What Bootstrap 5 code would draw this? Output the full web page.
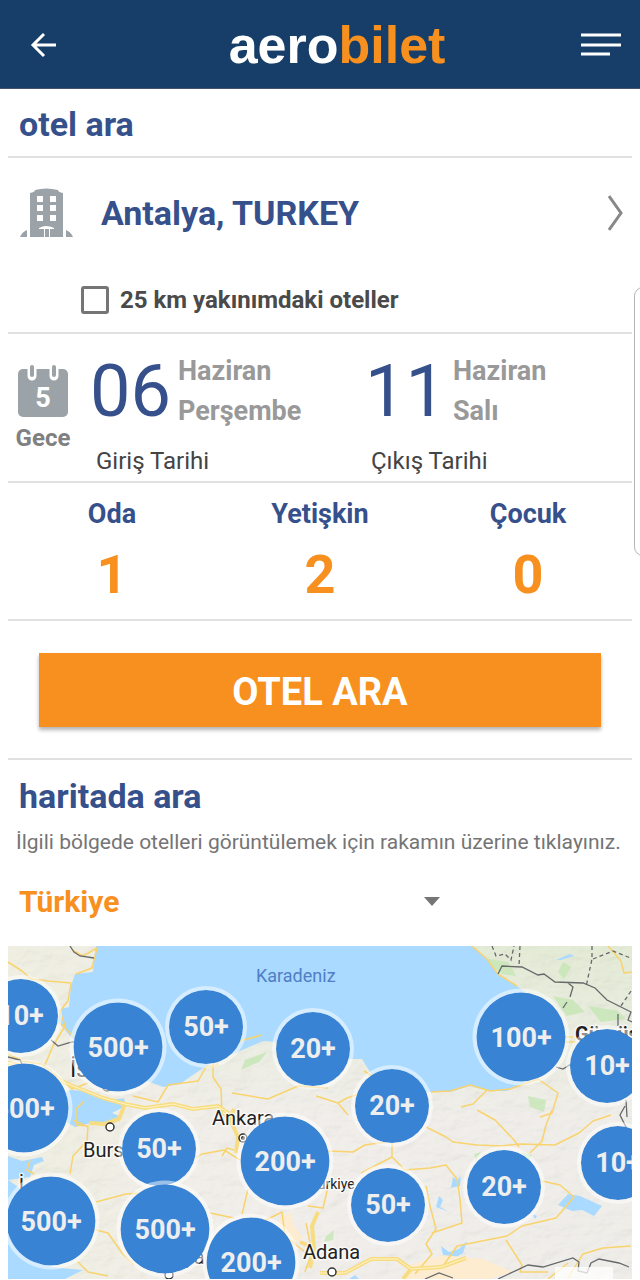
<!DOCTYPE html>
<html lang="tr">
<head>
<meta charset="utf-8">
<meta name="viewport" content="width=device-width, initial-scale=1">
<title>aerobilet – otel ara</title>
<link href="https://cdn.jsdelivr.net/npm/bootstrap@5.3.0/dist/css/bootstrap.min.css" rel="stylesheet">
<style>
:root { --navy:#163e69; --ink:#36508c; --orange:#f7901e; --line:#e0e0e0; --muted:#999; }
body { font-family:Roboto, sans-serif; color:#444; background:#fff; overflow-x:hidden; }
button { color:inherit; }
.topbar { background:var(--navy); height:89px; padding:2px 18px 0 28px; border-bottom:1px solid #45536f; }
.topbar .btn { width:42px; }
.brand { font:700 52px/56px "Liberation Sans", sans-serif; color:#fff; padding-left:24px; margin-right:auto; margin-left:auto; }
.brand span { color:var(--orange); }
.rule { border-bottom:2px solid var(--line); }
.title { font-size:34px; line-height:40px; font-weight:700; color:var(--ink); margin:0; padding-left:11px; }
.head { height:69px; padding-top:15px; }
.place { height:110px; padding:0 8px 0 12px; gap:28px; }
.place-name { font-size:34px; line-height:40px; font-weight:700; color:var(--ink); }
.near { height:64px; padding-left:73px; gap:11px; font-size:24px; line-height:28px; font-weight:700; }
.near .form-check-input { width:28px; height:28px; margin:0; border:3px solid #757575; border-radius:3px; }
.near label { color:#4a4a4a; }
.stay { height:149px; }
.nights { width:70px; padding-top:30px; color:#808080; font-size:24px; line-height:28px; font-weight:700; }
.nights svg { margin-bottom:6px; }
.date-box { padding-top:14px; color:var(--muted); }
.day { font-size:72px; line-height:88px; color:var(--ink); width:88px; }
.month { font-size:27px; line-height:40px; font-weight:700; padding-top:3px; }
.caption { font-size:24px; line-height:28px; color:#444; padding-left:6px; margin-top:11px; }
.guests { height:138px; padding-top:14px; }
.guest-label { font-size:27px; line-height:34px; font-weight:700; color:var(--ink); }
.guest-count { font-size:54px; line-height:64px; font-weight:700; color:var(--orange); margin-top:12px; }
.search { padding:32px 31px; height:139px; }
.search .btn { background:var(--orange); color:#fff; font-size:38px; line-height:44px; font-weight:700; padding:17px 15px 13px; border:0; border-radius:0; box-shadow:0 3px 4px rgba(0,0,0,.3); }
.hint { font-size:21px; line-height:28px; color:#757575; margin:12px 0 0; padding-left:8px; }
.country { appearance:none; width:428px; border:0; padding:0 0 0 11px; margin:26px 0 24px; background:transparent; font-size:30px; line-height:40px; height:40px; font-weight:700; color:var(--orange); }
.country-wrap svg { margin-left:-12px; pointer-events:none; }
.map { position:relative; overflow:hidden; aspect-ratio:624/333; }
.map > svg { display:block; width:100%; height:100%; }
.pin { position:absolute; left:calc(var(--x) / 624 * 100%); top:calc(var(--y) / 333 * 100%); width:82px; height:82px; transform:translate(-50%,-50%); padding:0; border:4px solid rgba(255,255,255,.5); border-radius:50%; background:#3883d3; background-clip:padding-box; color:#eee; font-size:27px; line-height:32px; font-weight:700; white-space:nowrap; }
.pin-lg { width:97px; height:97px; }
.drawer { position:absolute; right:-12px; top:287px; width:18px; height:269px; background:#fff; border:1px solid #b5b5b5; border-radius:10px; }
</style>
</head>
<body>
<div class="position-relative overflow-hidden">
<header class="topbar d-flex align-items-center justify-content-between">
  <button class="btn p-0 border-0 lh-1 text-start" aria-label="Geri"><svg width="40" height="30" viewBox="0 0 40 30" fill="none" stroke="#fff" stroke-width="3"><path d="M28 15H5M16 4 5 15l11 11"/></svg></button>
  <div class="brand">aero<span>bilet</span></div>
  <button class="btn p-0 border-0 lh-1" aria-label="Menü"><svg width="42" height="26" viewBox="0 0 42 26" fill="none" stroke="#fff" stroke-width="3"><path d="M1 3h40M1 13h40M1 22h29"/></svg></button>
</header>
<main class="px-2">
  <div class="head rule"><h1 class="title">otel ara</h1></div>
  <section class="rule">
    <button class="place btn border-0 rounded-0 w-100 d-flex align-items-center text-start">
      <svg width="53" height="52" viewBox="0 0 53 52" fill="#9ba3a8"><path fill-rule="evenodd" d="M10 6Q15 5 15 3Q26 0 38 3Q38 5 43 6V50H34V41Q26 37 19 41V50H10ZM17 9v6h6V9Zm13 0v6h6V9ZM17 18v6h6v-6Zm13 0v6h6v-6ZM17 28v6h6v-6Zm13 0v6h6v-6Z"/><path d="M0 50q2-5 7-7v7ZM53 50q-2-5-7-7v7ZM19 42h5v8h-5Zm6 0h4v8h-4Zm5 0h4v8h-4Z"/></svg>
      <span class="place-name flex-grow-1">Antalya, TURKEY</span>
      <svg width="16" height="38" viewBox="0 0 16 38" fill="none" stroke="#888" stroke-width="3"><path d="M1 2 13 19 1 36"/></svg>
    </button>
    <div class="near d-flex align-items-center"><input class="form-check-input" type="checkbox" id="near"><label for="near">25 km yakınımdaki oteller</label></div>
  </section>
  <section class="stay rule d-flex">
    <div class="nights text-center">
      <svg class="d-block mx-auto" width="52" height="54" viewBox="0 0 52 54"><rect x="1" y="5" width="50" height="48" rx="5" fill="#9ba3a8"/><path d="M15 2v10M37 2v10" stroke="#fff" stroke-width="9" stroke-linecap="round"/><path d="M15 3v8M37 3v8" stroke="#9ba3a8" stroke-width="4" stroke-linecap="round"/><text x="26" y="43" font-size="27" font-weight="700" text-anchor="middle" fill="#fff">5</text></svg>
      Gece
    </div>
    <div class="d-flex flex-grow-1 ps-2 ms-1">
      <div class="date-box col-6"><div class="d-flex"><div class="day">06</div><div class="month">Haziran<br>Perşembe</div></div><div class="caption">Giriş Tarihi</div></div>
      <div class="date-box col-6 ps-1"><div class="d-flex"><div class="day">11</div><div class="month">Haziran<br>Salı</div></div><div class="caption">Çıkış Tarihi</div></div>
    </div>
  </section>
  <section class="guests rule row gx-0 text-center">
    <div class="col-4"><div class="guest-label">Oda</div><div class="guest-count">1</div></div>
    <div class="col-4"><div class="guest-label">Yetişkin</div><div class="guest-count">2</div></div>
    <div class="col-4"><div class="guest-label">Çocuk</div><div class="guest-count">0</div></div>
  </section>
  <div class="search rule"><button class="btn w-100">OTEL ARA</button></div>
  <section class="pt-3">
    <h2 class="title">haritada ara</h2>
    <p class="hint">İlgili bölgede otelleri görüntülemek için rakamın üzerine tıklayınız.</p>
    <div class="country-wrap d-flex align-items-center">
      <select class="country" aria-label="Ülke"><option>Türkiye</option></select>
      <svg width="16" height="9" viewBox="0 0 16 9"><path d="M0 0h16L8 9Z" fill="#757575"/></svg>
    </div>
    <div class="map">
      <svg viewBox="0 0 624 333" preserveAspectRatio="xMidYMid slice" fill="none">
        <defs>
          <filter id="relief" x="0" y="0" width="100%" height="100%"><feTurbulence type="fractalNoise" baseFrequency=".05 .08" numOctaves="3" seed="8"/><feDiffuseLighting surfaceScale="5" lighting-color="#fff"><feDistantLight azimuth="225" elevation="60"/></feDiffuseLighting></filter>
          <linearGradient id="soil" x2="1" y2="0"><stop stop-color="#efeee0"/><stop offset=".4" stop-color="#f1eeea"/><stop offset="1" stop-color="#efede8"/></linearGradient>
          <linearGradient id="woods" x2="0" y2="1"><stop stop-color="#e2ead3"/><stop offset="1" stop-color="#e2ead3" stop-opacity="0"/></linearGradient>
        </defs>
        <path fill="url(#soil)" d="M0 0h624v333H0z"/>
        <path fill="url(#woods)" d="M400 0h224v170H180V80Z"/>
        <path filter="url(#relief)" opacity=".08" d="M0 0h624v333H0z"/>
        <g fill="#c3e6b1" opacity=".75"><path d="m475 12 25 4 8 14-14-2ZM545 50l20 4 12 12-18 4ZM580 60l30 5 8 8-25 3ZM237 114l22-8-8 10-18 8ZM555 16l8 5-7 12-6-7ZM520 150l18 4-2 12-14-5ZM466 208l7-2-5 9ZM514 206l10 3-4 8ZM318 290l8-6-1 10-9 2Z"/></g>
        <g fill="#aadaff">
          <path d="M88 0 86 13 85 26 67 28 63 40 61 61 52 63 50 76 65 93 72 120 110 140 139 135 155 141 172 138 189 126 205 116 232 105 255 95 269 96 305 130 342 113 354 113 362 126 385 145 422 146 442 146 462 140 482 145 499 145 512 140 545 110 535 60 509 40 490 28 479 13 464 0Z"/>
          <path d="m48 152 14-8 18 1 20 10 16-3 2 8-14 7 10 4-7 6-20-1-20 5-14-8Z"/>
          <path d="m0 210 14 5 20-4 2 4-10 4-4 12-22 3ZM0 234l18 12 24 75 33 3-18 9H0Z"/>
          <path d="m560 248 12 2 22 10-8 10-12-6-10 1-14-6ZM427 312l8-3-2-9 8 6 10-3 8-8-4 12-10 6-4 10-7-4-8 1ZM445 231l4 3 4-3-1 9-9 2ZM431 250l4 4-3 7 9 5-13-5ZM524 268l5 2-2 3ZM341 333l6-4 4 4ZM548 14l14-6 4 2-13 4Z"/>
        </g>
        <g fill="#fdecd0"><path d="m248 247 7-2-3 12ZM272 273l10-7 3 12 10 14-10 7-14-12ZM400 320l35-11 40 4 30 13-25 7h-85Z"/></g>
        <g stroke="#f8d36e" stroke-width="1.5" stroke-linejoin="round">
          <path d="M0 16 14 25 23 33 40 35 63 37 60 55 52 65 57 80 45 100 36 121M68 28 84 22 89 2 75 10 66 5M52 77 65 90M0 108l14 7 20 3 30 25 16-6M125 150l25 6 10-17 30-4 8-14 12-2-4-14 18-8 30-8M224 147l36 6 30-13 30 2"/>
          <path d="M205 118v13l8 12 1 25 12 8M76 155 68 163 68 179 80 180 79 195 65 210 62 228M65 174l15 7M22 214l-3 10 7 4M88 256l30-8 18-1M188 212l6-4 22-4 16 10M214 210l5-8 7 2M240 243l-6 25M202 267l24 5M88 284l12 3 14 20 12 12M70 316l10 10 20 4M252 277l22-11 3 24 25 20M298 277l6 29-7 20"/>
          <path d="m356 125 10 6M308 150l22 7 9-5 12-4M330 157l10 12M320 205l25 1 12-7 27-4 0 16-31 16M384 211l13 13 25-2 16-3 11 14 3 20 2 24-30 10M418 181l20 10 7 5 24 3 25 1 18-2 35 1 24-12 14-12 18-6M469 164l18 10 19 20 5 7M544 164l-6 15-4 16-12 12M423 146l19-1 20-6 20 6 20-2 28-10 20 14-6 20-12 4M545 92v-6M553 91h12M553 96h15M480 143l-15 15-12 3M534 235l18 4 14 12-18 21-34 8-15 10-50 10-14 20M498 294l16 25-2 7 28 0M418 240l3 16 7 27-10 15 6 10-17 20"/>
          <path d="m464 0 15 13 11 15 19 12M600 0l13 15 3 12 8-1M560 332l15-24 20-6 28-2M540 333l20-16M300 260l15 2 6-25"/>
        </g>
        <g stroke="#f8dc82" stroke-width="4" stroke-linejoin="round"><path d="M0 117l30 6 30 15 35 14 22 6 20 4 28-4 20 5 25-3 20 14M117 158l-6 15-15 5-15-1M226 163l-4 10 8 18-2 16"/><path d="m292 296 14 6-2-22 6-14M306 302l-4 20M312 327h25l26-14h26l14 10 30-2 25-9M403 323l-8 10"/></g>
        <g stroke="#fff5c7" stroke-width="1"><path d="M0 117l30 6 30 15 35 14 22 6 20 4 28-4 20 5 25-3 20 14M312 327h25l26-14h26l14 10 30-2 25-9"/></g>
        <g stroke="#66696b" stroke-width="1.3"><path d="m62 0 4 6 6 4 14 2M43 94l7 6 14-4h8M0 111l12 3 3 6M490 28l4-8 20 1 16 8 6-1 11 8 28 1 12 5 12 12 24 12-3 8 4 2M560 37l5 4-3 10M559 56l-4 6M548 121l7 2 8-5M610 68v12M618 154l1 17M617 160l-5 9 7 14M417 333l14-6 14 5M490 333l30-14 15 2 30-9 6 4-1 9 9 2 4-10 8-4 20 4 10 4"/><path stroke-dasharray="4 3" d="m484 0 4 10 9-2 6 6 3-14M512 0l-1 20M584 0v13l-6 28M585 13l20-8 20 8M623 45l-10 15"/></g>
        <g fill="#fff" stroke="#333" stroke-width="1.5"><circle cx="102" cy="181" r="4"/><circle cx="235" cy="192" r="4"/><circle cx="324" cy="326" r="4"/><circle cx="161" cy="329" r="4"/><circle cx="99" cy="141" r="4"/></g><circle cx="235" cy="192" r="2" fill="#333"/>
        <path fill="#fff" opacity=".75" d="M547 321h58v12h-58z"/>
        <g font-family="Roboto, sans-serif" font-size="20" fill="#222" stroke="#fff" stroke-opacity=".7" stroke-width="3" paint-order="stroke" stroke-linejoin="round">
          <text x="248" y="36" font-size="18" fill="#4f7ec6" stroke="none">Karadeniz</text>
          <text x="204" y="179">Ankara</text><text x="75" y="211">Bursa</text><text x="295" y="313">Adana</text>
          <text x="302" y="243" font-size="14">Türkiye</text><text x="62" y="131" font-size="23">İs</text><text x="11" y="243">i</text><text x="567" y="95" font-weight="700">Gümüş</text><text x="130" y="318">Antalya</text>
        </g>
      </svg>
      <button class="pin" style="--x:13;--y:70">10+</button>
      <button class="pin pin-lg" style="--x:16;--y:162">500+</button>
      <button class="pin pin-lg" style="--x:110;--y:101">500+</button>
      <button class="pin" style="--x:198;--y:81">50+</button>
      <button class="pin" style="--x:305;--y:103">20+</button>
      <button class="pin" style="--x:384;--y:160">20+</button>
      <button class="pin pin-lg" style="--x:513;--y:91">100+</button>
      <button class="pin" style="--x:599;--y:120">10+</button>
      <button class="pin" style="--x:151;--y:203">50+</button>
      <button class="pin pin-lg" style="--x:277;--y:215">200+</button>
      <button class="pin" style="--x:380;--y:259">50+</button>
      <button class="pin" style="--x:496;--y:241">20+</button>
      <button class="pin" style="--x:610;--y:217">10+</button>
      <button class="pin pin-lg" style="--x:43;--y:275">500+</button>
      <button class="pin pin-lg" style="--x:157;--y:283">500+</button>
      <button class="pin pin-lg" style="--x:243;--y:316">200+</button>
    </div>
  </section>
</main>
<div class="drawer"></div>
</div>
<script src="https://cdn.jsdelivr.net/npm/bootstrap@5.3.0/dist/js/bootstrap.bundle.min.js"></script>
</body>
</html>
